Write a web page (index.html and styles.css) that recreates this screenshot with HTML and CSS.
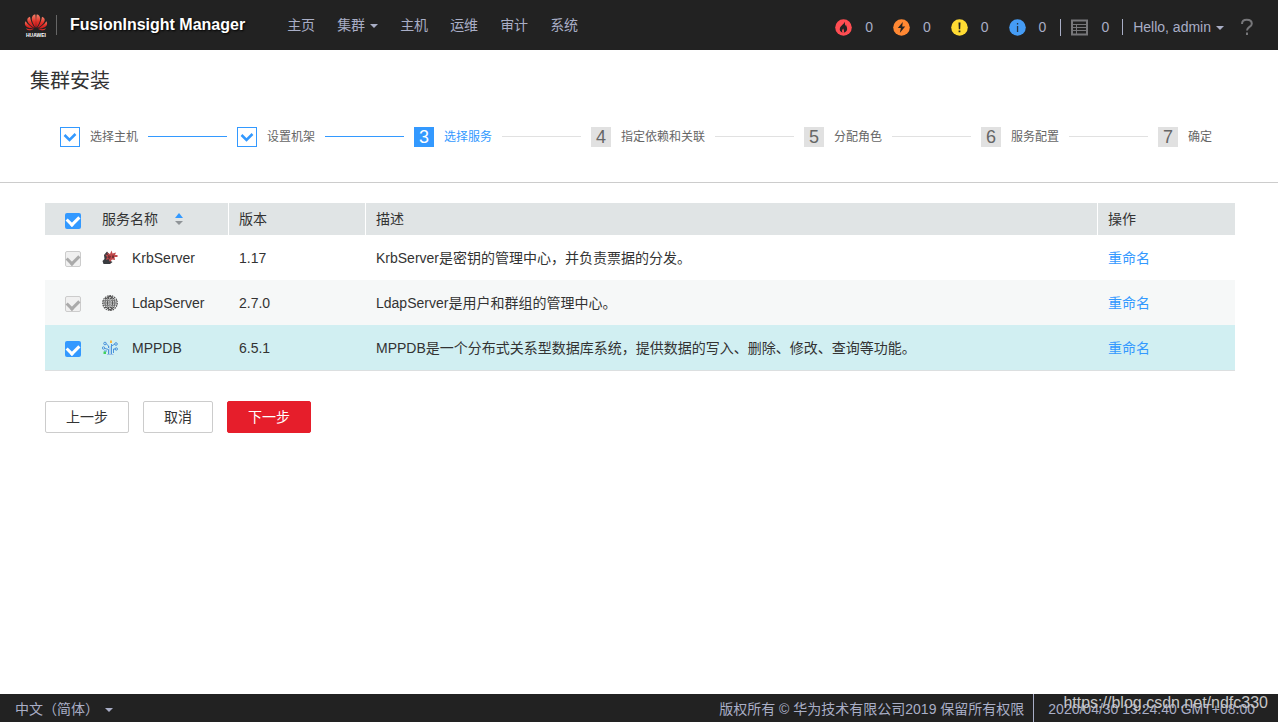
FILE: index.html
```html
<!DOCTYPE html>
<html lang="zh-CN">
<head>
<meta charset="utf-8">
<meta name="viewport" content="width=device-width, initial-scale=1">
<title>FusionInsight Manager</title>
<link rel="stylesheet" href="styles.css">
</head>
<body>
<header class="topbar">
  <svg class="logo" viewBox="0 0 26 26" role="img" aria-label="HUAWEI">
    <defs>
      <linearGradient id="petal" x1="0" y1="0" x2="0" y2="1">
        <stop offset="0" stop-color="#f4826a"/>
        <stop offset="0.5" stop-color="#e2332a"/>
        <stop offset="1" stop-color="#c8141a"/>
      </linearGradient>
    </defs>
    <g fill="url(#petal)" transform="translate(0 1.500) scale(1 .87)">
      <path d="M12.600 16.500C9.600 11 7.600 6.500 9.600 2.800C10.400 1.700 11.400 1.300 12.400 1.200C13 6 13.100 11 12.600 16.500Z"/>
      <path d="M13.400 16.500C16.400 11 18.400 6.500 16.400 2.800C15.600 1.700 14.600 1.300 13.600 1.200C13 6 12.900 11 13.400 16.500Z"/>
      <path d="M11.700 16.800C7.500 13.800 4 10.500 4.300 6.800C4.500 5.200 5.700 4.200 7 3.700C7.500 8 9.300 12.500 11.700 16.800Z"/>
      <path d="M14.300 16.800C18.500 13.800 22 10.500 21.700 6.800C21.500 5.200 20.300 4.200 19 3.700C18.500 8 16.700 12.500 14.300 16.800Z"/>
      <path d="M11 17.400C6.500 17.300 2.700 15.800 2 12.600C1.700 11.200 2 10 2.700 9C4.600 12.500 7.600 15.300 11 17.400Z"/>
      <path d="M15 17.400C19.500 17.300 23.300 15.800 24 12.600C24.300 11.200 24 10 23.300 9C21.400 12.500 18.400 15.300 15 17.400Z"/>
      <path d="M10.700 18.200C7.500 20 4.700 20 3.200 17.200C5.500 18 8 18.200 10.700 18.200Z"/>
      <path d="M15.300 18.200C18.500 20 21.300 20 22.800 17.200C20.500 18 18 18.200 15.300 18.200Z"/>
    </g>
    <text class="logo-text" x="13" y="25" text-anchor="middle">HUAWEI</text>
  </svg>
  <h1 class="brand">FusionInsight Manager</h1>
  <nav class="nav">
    <a href="#">主页</a>
    <a href="#">集群<span class="caret"></span></a>
    <a href="#">主机</a>
    <a href="#">运维</a>
    <a href="#">审计</a>
    <a href="#">系统</a>
  </nav>
  <div class="status">
    <div class="alarms">
      <a class="alarm" href="#" aria-label="紧急告警">
        <svg class="alarm-icon" viewBox="0 0 17 17"><circle cx="8.500" cy="8.500" r="8.300" fill="#ff4d52"/><path fill="#222" d="M9.300 2.700C9.600 5 6.300 6 5.100 8.500C4.100 10.800 5.200 12.900 7.500 13.700C6.700 12.200 7 10.800 8.300 9.500C8.400 10.500 8.900 11 9 12C9 12.700 8.900 13.200 8.700 13.700C11.200 13.200 12.700 11.200 12 8.700C11.700 7.500 11 6.900 11 5.600C10.500 6 10.300 6.700 10.200 7.300C9.700 5.700 10.400 4 9.300 2.700Z"/></svg>0
      </a>
      <a class="alarm" href="#" aria-label="重要告警">
        <svg class="alarm-icon" viewBox="0 0 17 17"><circle cx="8.500" cy="8.500" r="8.300" fill="#ff8833"/><path fill="#222" d="M9.800 3L4.800 9H7.900L6.800 14L12.200 7.600H9.200Z"/></svg>0
      </a>
      <a class="alarm" href="#" aria-label="次要告警">
        <svg class="alarm-icon" viewBox="0 0 17 17"><circle cx="8.500" cy="8.500" r="8.300" fill="#ffdb33"/><path fill="#222" d="M7.500 3.500H9.500L9.200 10.200H7.800ZM7.600 11.500H9.400V13.200H7.600Z"/></svg>0
      </a>
      <a class="alarm" href="#" aria-label="提示告警">
        <svg class="alarm-icon" viewBox="0 0 17 17"><circle cx="8.500" cy="8.500" r="8.300" fill="#459cf5"/><path fill="#234" d="M7.900 4H9.200V5.500H7.900ZM7.900 7H9.200V13H7.900Z"/></svg>0
      </a>
    </div>
    <a class="tasks" href="#" aria-label="任务">
      <svg class="alarm-icon" viewBox="0 0 17 17" fill="none" stroke="#77777a"><path stroke-width="2" d="M1 1.500H16V15.500H1Z"/><path d="M2 5.500H15M2 8.500H15M2 11.500H15M5.500 5V15"/></svg>0
    </a>
    <button class="user" type="button">Hello, admin<span class="caret"></span></button>
    <a class="help" href="#" aria-label="帮助">
      <svg viewBox="0 0 14 18" fill="none" stroke="#77777a" stroke-width="2"><path d="M2 6C2 3.200 4 1.800 6.800 1.800C9.800 1.800 11.800 3.300 11.800 5.700C11.800 9 7 8.800 7 12.500"/><path d="M7 14.500V17"/></svg>
    </a>
  </div>
</header>

<main class="content">
  <h2 class="title">集群安装</h2>
  <ol class="steps">
    <li class="step done"><span class="mark"><svg viewBox="0 0 18 18"><path d="M3.500 7L8.500 12L14.500 6"/></svg></span>选择主机</li>
    <li class="step done"><span class="mark"><svg viewBox="0 0 18 18"><path d="M3.500 7L8.500 12L14.500 6"/></svg></span>设置机架</li>
    <li class="step current" aria-current="step"><span class="mark">3</span>选择服务</li>
    <li class="step"><span class="mark">4</span>指定依赖和关联</li>
    <li class="step"><span class="mark">5</span>分配角色</li>
    <li class="step"><span class="mark">6</span>服务配置</li>
    <li class="step"><span class="mark">7</span>确定</li>
  </ol>

  <section class="panel">
    <table class="services">
      <colgroup><col class="col-check"><col class="col-name"><col class="col-version"><col><col class="col-action"></colgroup>
      <thead>
        <tr>
          <th class="check"><input type="checkbox" aria-label="全选" checked></th>
          <th class="divided"><button class="sort" type="button">服务名称<svg viewBox="0 0 8 12"><path fill="#3399ff" d="M4 0L8 5H0Z"/><path fill="#8f9498" d="M0 8H8L4 12Z"/></svg></button></th>
          <th class="divided">版本</th>
          <th class="divided">描述</th>
          <th>操作</th>
        </tr>
      </thead>
      <tbody>
        <tr>
          <td class="check"><input id="krb" type="checkbox" checked disabled></td>
          <td><label class="service" for="krb"><svg viewBox="0 0 16 16"><path fill="#3a3c40" d="M2 5L5 1.500L8 5L7 10L10.500 12L8 14L1.500 14L.500 11L2.500 9Z"/><path fill="#c04a4c" d="M5 2.500L8 4L9.500 .500L10.500 3.500L14 2.500L13 5H15.500V7H12.500L13 10L10 9.500L8 12L6.500 9L4 10L5 7L3 4.500L6 5Z"/><path fill="#733033" d="M6 5L9 6L8 9L5.500 8ZM10 5.500H12V8H10Z"/></svg>KrbServer</label></td>
          <td>1.17</td>
          <td>KrbServer是密钥的管理中心，并负责票据的分发。</td>
          <td><a class="link" href="#">重命名</a></td>
        </tr>
        <tr>
          <td class="check"><input id="ldap" type="checkbox" checked disabled></td>
          <td><label class="service" for="ldap"><svg viewBox="0 0 16 16" fill="none" stroke="#555"><circle cx="8" cy="8" r="7.300" stroke-width="1.200" stroke-dasharray="1.600 .8"/><ellipse cx="8" cy="8" rx="2.500" ry="7"/><ellipse cx="8" cy="8" rx="5" ry="6.600"/><path stroke-dasharray="1.800 .7" d="M8 1V15M3 3.500H13M1 5.800H15M1 8H15M1 10.200H15M3 12.500H13"/></svg>LdapServer</label></td>
          <td>2.7.0</td>
          <td>LdapServer是用户和群组的管理中心。</td>
          <td><a class="link" href="#">重命名</a></td>
        </tr>
        <tr class="selected">
          <td class="check"><input id="mppdb" type="checkbox" checked></td>
          <td><label class="service" for="mppdb"><svg viewBox="0 0 16 16" fill="none" stroke="#4c94dc"><path d="M6.500 14V9.500L3 8.500M9.500 14V4M11.500 13V9H14M4 3.500L6.500 6V8M9.500 6L13 4M5 11H2"/><circle cx="3" cy="3.500" r="1.300"/><circle cx="1.500" cy="8" r="1.200"/><circle cx="14" cy="4" r="1.300"/><circle cx="14.300" cy="9" r="1.200"/><path stroke="#9cbfe8" d="M5 14.500H11.500M8 6V14"/><path stroke="none" fill="#f5b541" d="M8 .5H10V3H8Z"/><path stroke="none" fill="#41d15b" d="M1.500 11.500H4V14H1.500Z"/></svg>MPPDB</label></td>
          <td>6.5.1</td>
          <td>MPPDB是一个分布式关系型数据库系统，提供数据的写入、删除、修改、查询等功能。</td>
          <td><a class="link" href="#">重命名</a></td>
        </tr>
      </tbody>
    </table>
    <div class="actions">
      <button class="btn" type="button">上一步</button>
      <button class="btn" type="button">取消</button>
      <button class="btn primary" type="button">下一步</button>
    </div>
  </section>
</main>

<footer class="footer">
  <button class="language" type="button">中文（简体）<span class="caret"></span></button>
  <span class="copyright">版权所有 © 华为技术有限公司2019 保留所有权限</span>
  <time class="clock" datetime="2020-04-30T13:24:40+08:00">2020/04/30 13:24:40 GMT+08:00</time>
  <span class="watermark">https://blog.csdn.net/ndfc330</span>
</footer>
</body>
</html>
```
FILE: styles.css
```css
* {
  box-sizing: border-box;
}

body {
  margin: 0;
  min-height: 100vh;
  display: flex;
  flex-direction: column;
  background: #fff;
  color: #333;
  font: 14px/20px "Liberation Sans", Arial, "Noto Sans CJK SC", sans-serif;
}

a {
  color: inherit;
  text-decoration: none;
}

button {
  border: 0;
  padding: 0;
  background: none;
  color: inherit;
  font: inherit;
  cursor: pointer;
}

.caret {
  display: inline-block;
  margin-left: 5px;
  border: 4px solid transparent;
  border-top-color: currentColor;
  border-bottom: 0;
  vertical-align: middle;
}

/* Top bar */
.topbar {
  display: flex;
  align-items: center;
  height: 50px;
  padding: 0 24px 0 23px;
  background: #222;
  color: #a9aec6;
}

.logo {
  width: 26px;
  height: 26px;
}

.logo-text {
  fill: #fff;
  font-size: 5px;
  font-weight: bold;
}

.brand {
  margin: 0 0 0 7px;
  padding-left: 13px;
  border-left: 1px solid #666;
  color: #fff;
  font-size: 16px;
  line-height: 20px;
  text-shadow: 1px 1px 2px #000;
}

.nav {
  display: flex;
  gap: 22px;
  margin-left: 42px;
}

.status {
  display: flex;
  align-items: center;
  gap: 10px;
  margin-left: auto;
  padding-top: 4px;
}

.alarms {
  display: flex;
  gap: 20px;
  padding-right: 4px;
}

.alarm,
.tasks {
  display: flex;
  align-items: center;
  gap: 13px;
  line-height: 16px;
}

.alarm-icon {
  width: 17px;
  height: 17px;
}

.tasks,
.user {
  padding-left: 10px;
  border-left: 1px solid #a9aec6;
  line-height: 16px;
}

.tasks {
  padding-right: 3px;
}

.help {
  margin-left: 6px;
  line-height: 0;
}

.help svg {
  width: 14px;
  height: 18px;
}

/* Wizard steps */
.content {
  flex: 1;
}

.title {
  margin: 0;
  padding: 18px 30px 0;
  font-size: 20px;
  font-weight: normal;
  line-height: 26px;
}

.steps {
  display: flex;
  margin: 0;
  padding: 33px 66px 35px 60px;
  border-bottom: 1px solid #ccc;
  list-style: none;
  color: #666;
  font-size: 12px;
}

.step {
  display: flex;
  flex: 1 0 auto;
  align-items: center;
  gap: 10px;
  height: 20px;
}

.step:last-child {
  flex: none;
}

.step:not(:last-child)::after {
  content: "";
  flex: 1;
  height: 1px;
  margin: 0 10px 1px 0;
  background: #e1e1e1;
}

.step.done:not(:last-child)::after {
  background: #39f;
}

.mark {
  width: 20px;
  height: 20px;
  background: #e1e1e1;
  font-size: 18px;
  text-align: center;
}

.done .mark {
  border: 1px solid #39f;
  background: #fff;
}

.mark svg {
  display: block;
  width: 18px;
  height: 18px;
  fill: none;
  stroke: #39f;
  stroke-width: 2.5;
}

.current {
  color: #39f;
}

.current .mark {
  background: #39f;
  color: #fff;
}

/* Service table */
.panel {
  padding: 20px 43px 20px 45px;
}

.services {
  width: 100%;
  border-spacing: 0;
  table-layout: fixed;
}

.col-check {
  width: 47px;
}

.col-name,
.col-version,
.col-action {
  width: 137px;
}

th,
td {
  padding: 0 10px;
  font-weight: normal;
  text-align: left;
}

th {
  height: 32px;
  background: #e0e4e5;
}

.divided {
  border-right: 1px solid #fff;
}

td {
  height: 45px;
}

tbody tr:nth-child(even) {
  background: #f6f8f8;
}

.selected {
  background: #d1eff2;
}

.selected td {
  height: 46px;
  border-bottom: 1px solid #dcdfe0;
}

.services .check {
  padding: 3px 0 0 20px;
  line-height: 0;
}

input[type="checkbox"] {
  display: inline-grid;
  width: 16px;
  height: 16px;
  margin: 0;
  border-radius: 2px;
  place-content: center;
  appearance: none;
  background: #39f;
  color: #fff;
}

input[type="checkbox"]:disabled {
  border: 1px solid #ccc;
  background: #f0f0f0;
  color: #aaa;
}

input[type="checkbox"]:checked::before {
  content: "";
  width: 9px;
  height: 6px;
  margin-bottom: 2px;
  border: solid currentColor;
  border-width: 0 0 3px 3px;
  transform: rotate(-45deg);
}

.sort,
.service {
  display: flex;
  align-items: center;
}

.sort {
  gap: 17px;
}

.sort svg {
  width: 8px;
  height: 12px;
}

.service {
  gap: 14px;
}

.service svg {
  width: 16px;
  height: 16px;
}

.link {
  color: #39f;
}

.actions {
  display: flex;
  gap: 14px;
  padding-top: 30px;
}

.btn {
  height: 32px;
  padding: 0 20px;
  border: 1px solid #ccc;
  border-radius: 2px;
  background: #fff;
}

.btn.primary {
  border-color: #e61e2b;
  background: #e61e2b;
  color: #fff;
}

/* Footer */
.footer {
  position: relative;
  display: flex;
  align-items: stretch;
  height: 28px;
  padding: 0 23px 0 15px;
  background: #222;
  color: #a9aec6;
  line-height: 30px;
}

.language .caret {
  margin-left: 6px;
}

.copyright {
  margin-left: auto;
  padding-right: 9px;
  border-right: 1px solid #a9aec6;
}

.clock {
  padding-left: 14px;
}

.watermark {
  position: absolute;
  right: 10px;
  top: 0;
  color: #c8c8c8;
  font-size: 16px;
  line-height: 18px;
}
```
